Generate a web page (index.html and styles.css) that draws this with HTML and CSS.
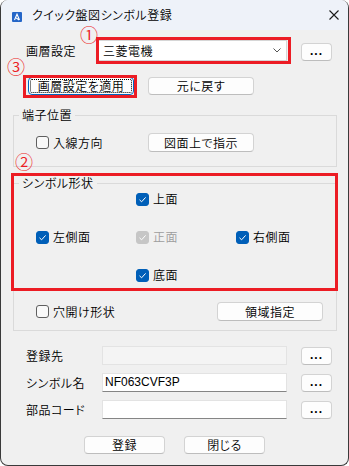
FILE: index.html
```html
<!DOCTYPE html>
<html lang="ja">
<head>
    <meta charset="UTF-8">
    <title>クイック盤図シンボル登録</title>
    <link rel="stylesheet" href="styles.css">
</head>
<body>
    <div class="window">
        <div class="titlebar">
            <svg class="app-icon" viewBox="0 0 10 10">
                <rect width="10" height="10" rx="1" fill="#2466c8"/>
                <path d="M2.5 8 L5 2.2 L7.5 8 M4.2 6 L7.2 8" stroke="#fff" stroke-width="1.1" fill="none"/>
            </svg>
            <span class="title">クイック盤図シンボル登録</span>
            <svg class="close" viewBox="0 0 10 10">
                <path d="M0.5 0.5 L9.5 9.5 M9.5 0.5 L0.5 9.5" stroke="#1a1a1a" stroke-width="1.1"/>
            </svg>
        </div>

        <div class="layer-row">
            <span class="label">画層設定</span>
            <div class="combo">
                <span>三菱電機</span>
                <svg class="chevron" viewBox="0 0 8 5">
                    <path d="M0.5 0.5 L4 4 L7.5 0.5" stroke="#555" stroke-width="1" fill="none"/>
                </svg>
            </div>
            <button class="btn dots">...</button>
        </div>

        <div class="action-row">
            <button class="btn focused">画層設定を適用</button>
            <button class="btn">元に戻す</button>
        </div>

        <div class="group terminal">
            <div class="group-title">端子位置</div>
            <div class="group-row">
                <label class="check-item wide"><span class="check"></span>入線方向</label>
                <button class="btn wide-btn">図面上で指示</button>
            </div>
        </div>

        <div class="group shape">
            <div class="group-title">シンボル形状</div>
            <div class="shape-grid">
                <label class="check-item top"><span class="check on"><svg viewBox="0 0 11 11"><path d="M2.5 5.8 L4.6 7.8 L8.6 3.4" stroke="#fff" stroke-width="1" fill="none"/></svg></span>上面</label>
                <label class="check-item left"><span class="check on"><svg viewBox="0 0 11 11"><path d="M2.5 5.8 L4.6 7.8 L8.6 3.4" stroke="#fff" stroke-width="1" fill="none"/></svg></span>左側面</label>
                <label class="check-item front disabled"><span class="check dim"><svg viewBox="0 0 11 11"><path d="M2.5 5.8 L4.6 7.8 L8.6 3.4" stroke="#fff" stroke-width="1" fill="none"/></svg></span>正面</label>
                <label class="check-item right"><span class="check on"><svg viewBox="0 0 11 11"><path d="M2.5 5.8 L4.6 7.8 L8.6 3.4" stroke="#fff" stroke-width="1" fill="none"/></svg></span>右側面</label>
                <label class="check-item bottom"><span class="check on"><svg viewBox="0 0 11 11"><path d="M2.5 5.8 L4.6 7.8 L8.6 3.4" stroke="#fff" stroke-width="1" fill="none"/></svg></span>底面</label>
            </div>
            <div class="group-row hole-row">
                <label class="check-item wider"><span class="check"></span>穴開け形状</label>
                <button class="btn wide-btn">領域指定</button>
            </div>
        </div>

        <div class="field-row first">
            <span class="label field-label">登録先</span>
            <div class="field disabled"></div>
            <button class="btn dots">...</button>
        </div>
        <div class="field-row">
            <span class="label field-label">シンボル名</span>
            <div class="field">NF063CVF3P</div>
            <button class="btn dots">...</button>
        </div>
        <div class="field-row">
            <span class="label field-label">部品コード</span>
            <div class="field"></div>
            <button class="btn dots">...</button>
        </div>

        <div class="footer">
            <button class="btn footer-btn">登録</button>
            <button class="btn footer-btn">閉じる</button>
        </div>

        <!-- annotations -->
        <div class="mark mark-layer"></div>
        <div class="mark mark-apply"></div>
        <div class="mark mark-shape"></div>
        <span class="num num-1">①</span>
        <span class="num num-2">②</span>
        <span class="num num-3">③</span>
    </div>
</body>
</html>
```

FILE: styles.css
```css
* {
    box-sizing: border-box;
}
body {
    margin: 0;
    background: #fff;
    font-family: "Noto Sans CJK JP", sans-serif;
    font-size: 12px;
    font-weight: 350;
    color: #000;
    font-feature-settings: "palt";
    letter-spacing: 0.5px;
}
.window {
    position: relative;
    width: 349px;
    height: 466px;
    background: #f0f0f0;
    border: 1px solid #3a3a3a;
    border-top: none;
    border-radius: 8px;
    overflow: hidden;
}
.titlebar {
    height: 30px;
    background: #eef2f9;
    display: flex;
    align-items: center;
    padding: 0 9px 0 11px;
}
.app-icon {
    width: 10px;
    height: 10px;
    margin-top: 4px;
}
.title {
    margin-left: 10px;
    line-height: 14px;
}
.close {
    margin-left: auto;
    width: 10px;
    height: 10px;
}
.label {
    line-height: 14px;
}
.layer-row {
    display: flex;
    align-items: center;
    height: 21px;
    margin-top: 10px;
    padding-left: 25px;
}
.layer-row .label {
    width: 71px;
}
.combo {
    width: 190px;
    height: 21px;
    background: #fff;
    border: 1px solid #d6d6d6;
    display: flex;
    align-items: center;
    padding: 0 5px 0 5px;
    line-height: 14px;
}
.chevron {
    margin-left: auto;
    width: 8px;
    height: 5px;
}
.btn {
    font: inherit;
    font-feature-settings: "palt";
    letter-spacing: 0.5px;
    color: #000;
    background: #fdfdfd;
    border: 1px solid #d3d3d3;
    border-bottom-color: #bdbdbd;
    border-radius: 4px;
    padding: 0;
    line-height: 14px;
}
.dots {
    margin-left: 14px;
    width: 31px;
    height: 18px;
    font-family: "Liberation Sans", sans-serif;
    font-weight: bold;
    font-size: 12px;
    letter-spacing: 1px;
    padding-bottom: 5px;
}
.layer-row .dots {
    align-self: flex-end;
}
.action-row {
    display: flex;
    gap: 14px;
    margin-top: 16px;
    padding-left: 27px;
}
.action-row .btn {
    width: 106px;
    height: 18px;
}
.btn.focused {
    border-color: #0067c0;
    outline: 1px dotted #000;
    outline-offset: -3px;
}
.group {
    margin: 20px 0 0 12px;
    width: 324px;
    border: 1px solid #dadada;
}
.group.shape {
    margin-top: 16px;
    padding-bottom: 9px;
}
.group.terminal {
    padding-bottom: 14px;
}
.group-title {
    display: table;
    margin: -7px 0 0 5px;
    padding: 0 3px;
    background: #f0f0f0;
    line-height: 12px;
}
.group-row {
    display: flex;
    align-items: center;
    height: 19px;
    padding-left: 22px;
}
.terminal .group-row {
    margin-top: 12px;
}
.hole-row {
    margin-top: 17px;
}
.check-item {
    display: flex;
    align-items: center;
    gap: 4px;
    line-height: 14px;
}
.check-item.wide {
    width: 112px;
}
.check-item.wider {
    width: 181px;
}
.check-item.disabled {
    color: #9d9d9d;
}
.wide-btn {
    width: 106px;
    height: 19px;
}
.check {
    width: 13px;
    height: 13px;
    border-radius: 3px;
    border: 1px solid #5f5f5f;
    background: #f9f9f9;
    display: flex;
    align-items: center;
    justify-content: center;
}
.check svg {
    width: 11px;
    height: 11px;
}
.check.on {
    background: #005fb8;
    border-color: #005fb8;
}
.check.dim {
    background: #c6c6c6;
    border-color: #c6c6c6;
}
.shape-grid {
    display: grid;
    grid-template-columns: 100px 100px 100px;
    grid-auto-rows: 20px;
    row-gap: 18px;
    padding-left: 22px;
}
.shape-grid .top {
    grid-column: 2;
    grid-row: 1;
}
.shape-grid .left {
    grid-column: 1;
    grid-row: 2;
}
.shape-grid .front {
    grid-column: 2;
    grid-row: 2;
}
.shape-grid .right {
    grid-column: 3;
    grid-row: 2;
}
.shape-grid .bottom {
    grid-column: 2;
    grid-row: 3;
}
.field-row {
    display: flex;
    align-items: center;
    height: 19px;
    margin-top: 8px;
    padding-left: 25px;
}
.field-row.first {
    margin-top: 15px;
}
.field-label {
    width: 76px;
}
.field {
    width: 185px;
    height: 19px;
    background: #fff;
    border: 1px solid #e3e3e3;
    border-bottom-color: #858585;
    padding-left: 2px;
    font-family: "Liberation Sans", sans-serif;
    font-weight: normal;
    letter-spacing: 0;
    line-height: 17px;
}
.field.disabled {
    background: #f4f4f4;
    border-color: #e3e3e3;
}
.footer {
    display: flex;
    justify-content: center;
    gap: 19px;
    margin-top: 17px;
}
.footer-btn {
    width: 81px;
    height: 18px;
}
.mark {
    position: absolute;
    border: 3px solid #ec1c24;
}
.mark-layer {
    left: 95px;
    top: 37px;
    width: 195px;
    height: 27px;
}
.mark-apply {
    left: 22px;
    top: 75px;
    width: 114px;
    height: 23px;
}
.mark-shape {
    left: 10px;
    top: 173px;
    width: 327px;
    height: 118px;
}
.num {
    position: absolute;
    color: #ec1c24;
    font-size: 18px;
    line-height: 18px;
    letter-spacing: 0;
}
.num-1 {
    left: 79px;
    top: 25px;
}
.num-2 {
    left: 14px;
    top: 152px;
}
.num-3 {
    left: 6px;
    top: 57px;
}
```
